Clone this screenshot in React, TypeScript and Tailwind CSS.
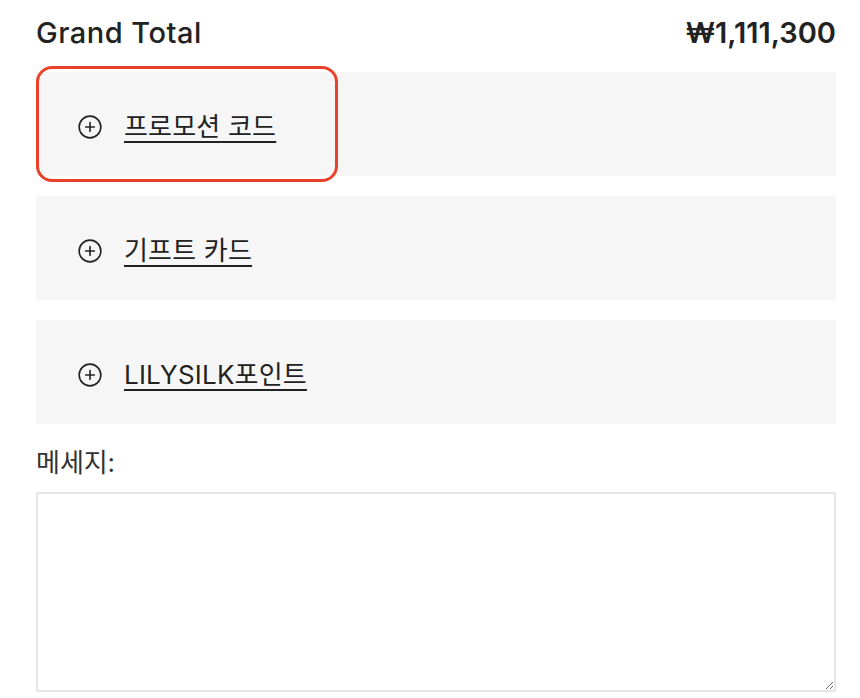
import { CirclePlus } from "lucide-react"

const items = ["프로모션 코드", "기프트 카드", "LILYSILK포인트"]

export default function App() {
  return (
    <div className="w-[860px] h-[698px] bg-white overflow-hidden pl-[36px] pr-[24px] pt-[13px] text-[#222]" style={{ fontFamily: "Inter, 'Noto Sans CJK KR', sans-serif" }}>
      <div className="flex items-center justify-between h-[40px]">
        <span className="text-[29px] font-medium tracking-[0.5px]">Grand Total</span>
        <span className="text-[29px] font-semibold">₩1,111,300</span>
      </div>
      <div className="relative mt-[19px] flex flex-col gap-[20px]">
        {items.map((t) => (
          <div key={t} className="h-[104px] bg-[#f6f6f6] flex items-center pl-[41px] pt-[5px]">
            <CirclePlus size={26} strokeWidth={1.5} className="text-[#222]" />
            <span className="ml-[21px] text-[26px] tracking-[0.2px] underline underline-offset-[5px] decoration-[2px]">{t}</span>
          </div>
        ))}
        <div className="absolute left-0 top-[-6px] w-[302px] h-[116px] rounded-[16px] border-[3px] border-[#e8432a]" />
      </div>
      <div className="mt-[20px] text-[26px] text-[#333] leading-[36px]" style={{ fontFamily: "'Noto Sans', 'Noto Sans CJK KR', sans-serif" }}>메세지:</div>
      <textarea className="mt-[12px] block w-full h-[200px] border-2 border-[#e6e6e6] resize-y outline-none" />
    </div>
  )
}
